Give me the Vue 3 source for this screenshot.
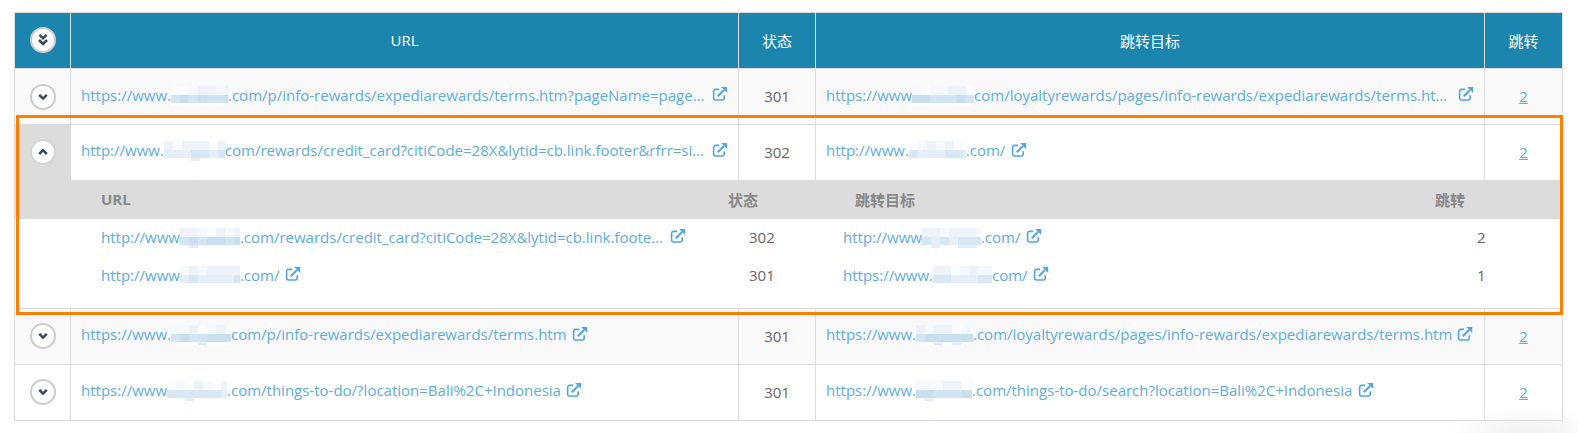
<script setup>
const blob = (w, seed, tone) => {
  const cells = []
  const cols = Math.ceil(w / 9)
  let s = seed * 7919 + 13
  const rnd = () => {
    s = (s * 1103515245 + 12345) % 2147483648
    return (s >> 8) % 100 / 100
  }
  const dark = tone === 'dark'
  for (let r = 0; r < 3; r++) {
    for (let c = 0; c < cols; c++) {
      const n = rnd()
      let fill = '#ffffff'
      if (r === 0) fill = n > 0.55 ? '#edf3f9' : n > 0.25 ? '#f5f8fc' : '#fbfcfe'
      if (r === 1) fill = dark ? (n > 0.5 ? '#c9dff0' : '#d3e4f2') : (n > 0.5 ? '#d8e7f4' : '#e6eff8')
      if (r === 2) fill = n > 0.85 ? '#e3edf7' : '#ffffff'
      cells.push({ x: c * 9, y: r * 9 - (r === 2 ? 1 : 0), h: r === 2 ? 3 : 9, fill })
    }
  }
  return { w, cells }
}

const L = (pre, w, seed, tone, post, gap) => ({ pre, blob: blob(w, seed, tone), post, gap })

const rows = [
  {
    cls: 'odd', icon: 'down', status: '301', hop: '2',
    url: L('https://www.', 57, 1, 'dark', '.com/p/info-rewards/expediarewards/terms.htm?pageName=page…', 8),
    target: L('https://www', 62, 2, 'dark', 'com/loyaltyrewards/pages/info-rewards/expediarewards/terms.ht…', 11),
  },
  {
    cls: 'open', icon: 'up', status: '302', hop: '2',
    url: L('http://www.', 61, 3, 'light', 'com/rewards/credit_card?citiCode=28X&lytid=cb.link.footer&rfrr=si…', 8),
    target: L('http://www.', 57, 4, 'light', '.com/', 6),
  },
  {
    cls: 'odd', icon: 'down', status: '301', hop: '2',
    url: L('https://www.', 60, 5, 'dark', 'com/p/info-rewards/expediarewards/terms.htm', 5),
    target: L('https://www.', 57, 6, 'dark', '.com/loyaltyrewards/pages/info-rewards/expediarewards/terms.htm', 5),
  },
  {
    cls: '', icon: 'down', status: '301', hop: '2',
    url: L('https://www', 60, 7, 'light', '.com/things-to-do/?location=Bali%2C+Indonesia', 5),
    target: L('https://www.', 56, 8, 'dark', '.com/things-to-do/search?location=Bali%2C+Indonesia', 6),
  },
]
const subRows = [
  {
    status: '302', hop: '2',
    url: L('http://www', 60, 9, 'dark', '.com/rewards/credit_card?citiCode=28X&lytid=cb.link.foote…', 7),
    target: L('http://www', 59, 10, 'light', '.com/', 6),
  },
  {
    status: '301', hop: '1',
    url: L('http://www', 60, 11, 'light', '.com/', 6),
    target: L('https://www.', 59, 12, 'light', 'com/', 5),
  },
]
const chevrons = {
  down: 'M4.2 5.8 L8 9.6 L11.8 5.8',
  up: 'M4.2 10 L8 6.2 L11.8 10',
}
</script>

<template>
  <div class="page">
    <table class="grid">
      <colgroup>
        <col class="c1" /><col class="c2" /><col class="c3" /><col class="c4" /><col class="c5" />
      </colgroup>
      <thead>
        <tr>
          <th>
            <span class="toggle all">
              <svg width="16" height="16" viewBox="0 0 16 16">
                <path d="M4.5 2.8 L8 6.3 L11.5 2.8 M4 8 L8 12 L12 8" fill="none" stroke="#34495e" stroke-width="2.5" />
              </svg>
            </span>
          </th>
          <th>URL</th>
          <th>状态</th>
          <th>跳转目标</th>
          <th>跳转</th>
        </tr>
      </thead>
      <tbody>
        <template v-for="row in rows" :key="row.url.pre + row.url.post">
          <tr :class="row.cls">
            <td class="tog">
              <span class="toggle" :class="{ bare: row.cls === 'open' }">
                <svg width="16" height="16" viewBox="0 0 16 16">
                  <path :d="chevrons[row.icon]" fill="none" stroke="#34495e" stroke-width="2.5" />
                </svg>
              </span>
            </td>
            <td v-for="link in [row.url]" :key="link.pre" class="lk">
              <span class="link">
                <span class="txt">{{ link.pre }}<svg class="blob" :width="link.blob.w" height="21"><rect v-for="(c, i) in link.blob.cells" :key="i" :x="c.x" :y="c.y" width="9" :height="c.h" :fill="c.fill" /></svg>{{ link.post }}</span>
                <svg class="ext" :style="{ marginLeft: link.gap + 'px' }" width="16" height="16" viewBox="0 0 16 16">
                  <path d="M7 3.4 H3.6 A2 2 0 0 0 1.6 5.4 V12 A2 2 0 0 0 3.6 14 H10.2 A2 2 0 0 0 12.2 12 V9.2" fill="none" stroke="#4fa6e2" stroke-width="1.6" />
                  <path d="M5.8 10.2 L12 4" fill="none" stroke="#4fa6e2" stroke-width="2" />
                  <path d="M9.2 1 H15.2 V7 Z" fill="#4fa6e2" />
                </svg>
              </span>
            </td>
            <td class="num">{{ row.status }}</td>
            <td v-for="link in [row.target]" :key="link.pre" class="lk">
              <span class="link">
                <span class="txt">{{ link.pre }}<svg class="blob" :width="link.blob.w" height="21"><rect v-for="(c, i) in link.blob.cells" :key="i" :x="c.x" :y="c.y" width="9" :height="c.h" :fill="c.fill" /></svg>{{ link.post }}</span>
                <svg class="ext" :style="{ marginLeft: link.gap + 'px' }" width="16" height="16" viewBox="0 0 16 16">
                  <path d="M7 3.4 H3.6 A2 2 0 0 0 1.6 5.4 V12 A2 2 0 0 0 3.6 14 H10.2 A2 2 0 0 0 12.2 12 V9.2" fill="none" stroke="#4fa6e2" stroke-width="1.6" />
                  <path d="M5.8 10.2 L12 4" fill="none" stroke="#4fa6e2" stroke-width="2" />
                  <path d="M9.2 1 H15.2 V7 Z" fill="#4fa6e2" />
                </svg>
              </span>
            </td>
            <td class="num"><a class="hop">{{ row.hop }}</a></td>
          </tr>
          <tr v-if="row.cls === 'open'" class="detail">
            <td colspan="5">
              <div class="sub-head">
                <span>URL</span><span>状态</span><span>跳转目标</span><span>跳转</span>
              </div>
              <div class="sub-body">
                <div v-for="s in subRows" :key="s.status" class="sub-row">
                  <span v-for="link in [s.url]" :key="link.pre" class="link">
                    <span class="txt">{{ link.pre }}<svg class="blob" :width="link.blob.w" height="21"><rect v-for="(c, i) in link.blob.cells" :key="i" :x="c.x" :y="c.y" width="9" :height="c.h" :fill="c.fill" /></svg>{{ link.post }}</span>
                    <svg class="ext" :style="{ marginLeft: link.gap + 'px' }" width="16" height="16" viewBox="0 0 16 16">
                      <path d="M7 3.4 H3.6 A2 2 0 0 0 1.6 5.4 V12 A2 2 0 0 0 3.6 14 H10.2 A2 2 0 0 0 12.2 12 V9.2" fill="none" stroke="#4fa6e2" stroke-width="1.6" />
                      <path d="M5.8 10.2 L12 4" fill="none" stroke="#4fa6e2" stroke-width="2" />
                      <path d="M9.2 1 H15.2 V7 Z" fill="#4fa6e2" />
                    </svg>
                  </span>
                  <span class="val">{{ s.status }}</span>
                  <span v-for="link in [s.target]" :key="link.pre" class="link">
                    <span class="txt">{{ link.pre }}<svg class="blob" :width="link.blob.w" height="21"><rect v-for="(c, i) in link.blob.cells" :key="i" :x="c.x" :y="c.y" width="9" :height="c.h" :fill="c.fill" /></svg>{{ link.post }}</span>
                    <svg class="ext" :style="{ marginLeft: link.gap + 'px' }" width="16" height="16" viewBox="0 0 16 16">
                      <path d="M7 3.4 H3.6 A2 2 0 0 0 1.6 5.4 V12 A2 2 0 0 0 3.6 14 H10.2 A2 2 0 0 0 12.2 12 V9.2" fill="none" stroke="#4fa6e2" stroke-width="1.6" />
                      <path d="M5.8 10.2 L12 4" fill="none" stroke="#4fa6e2" stroke-width="2" />
                      <path d="M9.2 1 H15.2 V7 Z" fill="#4fa6e2" />
                    </svg>
                  </span>
                  <span class="val">{{ s.hop }}</span>
                </div>
              </div>
            </td>
          </tr>
        </template>
      </tbody>
    </table>
    <div class="highlight"></div>
    <div class="corner"></div>
  </div>
</template>

<style scoped>
.page {
  position: relative;
  width: 1578px;
  height: 433px;
  overflow: hidden;
  background: #fff;
  font-family: "Open Sans", "Noto Sans CJK SC", sans-serif;
  font-size: 15px;
  color: #666;
}
.grid {
  position: absolute;
  left: 14px;
  top: 12px;
  width: 1549px;
  table-layout: fixed;
  border-collapse: collapse;
  z-index: 1;
}
.c1 { width: 56px; }
.c2 { width: 668px; }
.c3 { width: 77px; }
.c4 { width: 669px; }
.c5 { width: 78px; }
th, td {
  border: 1px solid #ddd;
  padding: 0;
  text-align: center;
  height: 56px;
  box-sizing: border-box;
}
th {
  background: #1c85ad;
  color: #fff;
  font-weight: 400;
  font-size: 15px;
  padding-bottom: 1px;
}
.odd td { background: #f9f9f9; }
.toggle {
  display: inline-flex;
  align-items: center;
  justify-content: center;
  width: 26px;
  height: 26px;
  box-sizing: border-box;
  border: 2px solid #ccc;
  border-radius: 50%;
  background: #fff;
  vertical-align: middle;
}
.toggle.bare { border-color: #d4d4d4; }
.open td { height: 55px; border-bottom: 0; background: #fff; }
.open .tog { background: #dcdcdc; border-right-color: #dcdcdc; }
.open .lk:nth-child(2) { border-left-color: #dcdcdc; }
.lk { text-align: left; padding: 0 0 2px 10px; }
.link {
  display: inline-flex;
  align-items: center;
  color: #5dade2;
  white-space: nowrap;
}
.txt {
  display: inline-block;
  line-height: 21px;
}
.blob { vertical-align: -6px; }
.ext { flex: none; margin-top: -3px; }
.num { padding-bottom: 1px; }
.hop { color: #5dade2; text-decoration: underline; }
.detail td { height: auto; border-top: 0; text-align: left; }
.sub-head {
  display: grid;
  grid-template-columns: 627px 127px 580px 1fr;
  align-items: center;
  height: 39px;
  padding-left: 86px;
  background: #dcdcdc;
  color: #888;
  font-weight: 700;
}
.sub-body { height: 89px; background: #fff; padding-left: 86px; }
.sub-row {
  display: grid;
  grid-template-columns: 648px 94px 634px 1fr;
  align-items: center;
  height: 38px;
}
.val { padding-bottom: 2px; }
.highlight {
  position: absolute;
  left: 16px;
  top: 115px;
  width: 1547px;
  height: 200px;
  box-sizing: border-box;
  border: 3px solid #ff8000;
  z-index: 2;
}
.corner {
  position: absolute;
  right: -40px;
  bottom: -60px;
  width: 180px;
  height: 90px;
  border-radius: 50%;
  background: radial-gradient(closest-side, #ececec, rgba(255, 255, 255, 0));
}
</style>
